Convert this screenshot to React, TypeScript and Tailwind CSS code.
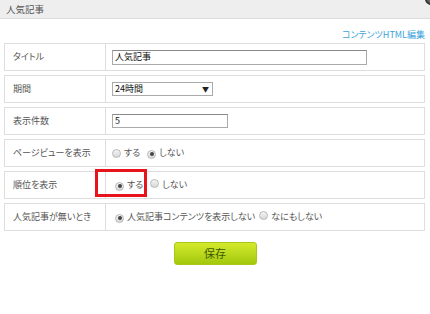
import type { ReactNode } from 'react';

const font = {
  fontFamily: '"Noto Sans CJK JP", "Liberation Sans", sans-serif',
  fontFeatureSettings: '"palt"',
};

function Radio({ checked }: { checked?: boolean }) {
  return (
    <span className="inline-flex h-[9px] w-[9px] items-center justify-center rounded-full border border-[#b8b8b8] bg-gradient-to-b from-[#f4f4f4] to-[#d8d8d8]">
      {checked && <span className="h-[4px] w-[4px] rounded-full bg-[#444]" />}
    </span>
  );
}

function Row({ label, children, extra }: { label: string; children: ReactNode; extra?: ReactNode }) {
  return (
    <div className="relative flex h-[28px] border border-[#dedede] bg-white">
      <div className="flex w-[101px] shrink-0 items-center border-r border-[#dedede] pl-[8px] text-[9px] text-[#555]">
        {label}
      </div>
      <div className="flex flex-1 items-center pl-[6px] text-[9px] text-[#555]">{children}</div>
      {extra}
    </div>
  );
}

export default function App() {
  return (
    <div className="relative h-[314px] w-[430px] overflow-hidden bg-white" style={font}>
      {/* ヘッダー */}
      <div className="flex h-[19px] items-center border-b border-[#dcdcdc] bg-[#eeeeee] pl-[6px] text-[9.5px] text-[#555]">
        人気記事
      </div>
      <span className="absolute right-[-7px] top-[-7px] h-[12px] w-[12px] rounded-full border-2 border-[#333] bg-[#666]" />

      <div className="mt-[9px] flex h-[14px] justify-end pr-[5px] text-[9px] leading-[14px] text-[#3aa3dc]">
        コンテンツHTML編集
      </div>

      <div className="mx-[4px] mt-[1px] flex w-[421px] flex-col gap-[4px]">
        <Row label="タイトル">
          <div className="flex h-[15px] w-[255px] items-center border border-[#aaa] border-t-[#888] bg-white pl-[2px] text-[9px] text-[#111]">
            人気記事
          </div>
        </Row>
        <Row label="期間">
          <div className="flex h-[14px] w-[101px] items-center justify-between border border-[#aaa] bg-white pl-[2px] pr-[3px] text-[9px] text-[#111]">
            <span>24時間</span>
            <span className="text-[7px] text-[#222]">▼</span>
          </div>
        </Row>
        <Row label="表示件数">
          <div className="flex h-[14px] w-[116px] items-center border border-[#aaa] border-t-[#888] bg-white pl-[2px] text-[9px] text-[#111]">
            5
          </div>
        </Row>
        <Row label="ページビューを表示">
          <Radio />
          <span className="ml-[3px]">する</span>
          <span className="ml-[7px]"><Radio checked /></span>
          <span className="ml-[3px]">しない</span>
        </Row>
        <Row
          label="順位を表示"
          extra={<span className="absolute left-[90px] top-[-3px] h-[28px] w-[52px] border-[3px] border-[#e8141c]" />}
        >
          <span className="ml-[3px]"><Radio checked /></span>
          <span className="ml-[3px]">する</span>
          <span className="ml-[7px]"><Radio /></span>
          <span className="ml-[3px]">しない</span>
        </Row>
        <Row label="人気記事が無いとき">
          <span className="ml-[3px]"><Radio checked /></span>
          <span className="ml-[3px]">人気記事コンテンツを表示しない</span>
          <span className="ml-[4px]"><Radio /></span>
          <span className="ml-[3px]">なにもしない</span>
        </Row>
      </div>

      <div className="mt-[11px] flex justify-center">
        <button className="flex h-[23px] w-[83px] items-center justify-center rounded-[3px] border border-[#a8c818] bg-gradient-to-b from-[#d4ea2a] to-[#a2c80c] text-[11px] text-[#3f5a05]">
          保存
        </button>
      </div>
    </div>
  );
}
